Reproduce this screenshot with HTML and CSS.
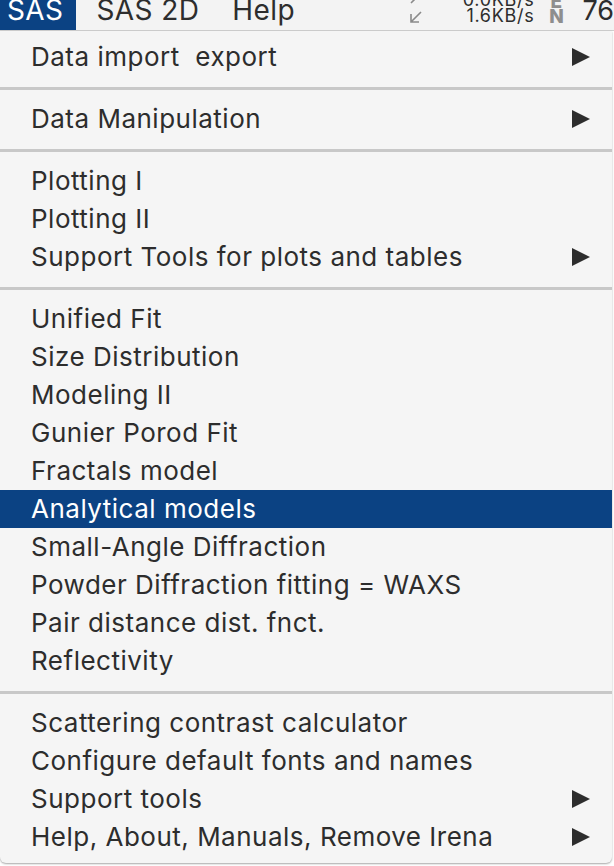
FILE: index.html
```html
<!DOCTYPE html>
<html>
<head>
<meta charset="utf-8">
<link rel="stylesheet" href="styles.css">
</head>
<body>
<div class="menubar">
  <div class="mb-item mb-active">SAS</div>
  <div class="mb-item">SAS 2D</div>
  <div class="mb-item">Help</div>
  <div class="mb-spacer"></div>
  <div class="net-arrows">
    <svg width="16" height="30" viewBox="0 0 16 30">
      <path d="M3 3 L13 -7 M7 -7 H13 V-1" fill="none" stroke="#8a8a8a" stroke-width="1.6"/>
      <path d="M13 12 L3 22 M3 14 V22 H11" fill="none" stroke="#8a8a8a" stroke-width="1.6"/>
    </svg>
  </div>
  <div class="net-rates">
    <span>0.0KB/s</span>
    <span>1.6KB/s</span>
  </div>
  <div class="lang">
    <span class="lang-e">E</span>
    <span class="lang-n">N</span>
  </div>
  <div class="clock">76</div>
</div>
<div class="menu">
  <div class="item"><span>Data import  export</span><i class="arrow"></i></div>
  <div class="sep"></div>
  <div class="item"><span>Data Manipulation</span><i class="arrow"></i></div>
  <div class="sep"></div>
  <div class="item"><span>Plotting I</span></div>
  <div class="item"><span>Plotting II</span></div>
  <div class="item"><span>Support Tools for plots and tables</span><i class="arrow"></i></div>
  <div class="sep"></div>
  <div class="item"><span>Unified Fit</span></div>
  <div class="item"><span>Size Distribution</span></div>
  <div class="item"><span>Modeling II</span></div>
  <div class="item"><span>Gunier Porod Fit</span></div>
  <div class="item"><span>Fractals model</span></div>
  <div class="item selected"><span>Analytical models</span></div>
  <div class="item"><span>Small-Angle Diffraction</span></div>
  <div class="item"><span>Powder Diffraction fitting = WAXS</span></div>
  <div class="item"><span>Pair distance dist. fnct.</span></div>
  <div class="item"><span>Reflectivity</span></div>
  <div class="sep"></div>
  <div class="item"><span>Scattering contrast calculator</span></div>
  <div class="item"><span>Configure default fonts and names</span></div>
  <div class="item"><span>Support tools</span><i class="arrow"></i></div>
  <div class="item"><span>Help, About, Manuals, Remove Irena</span><i class="arrow"></i></div>
</div>
</body>
</html>
```

FILE: styles.css
```css
html, body {
  margin: 0;
  padding: 0;
}
body {
  width: 614px;
  height: 866px;
  overflow: hidden;
  background: #ffffff;
  font-family: Inter, "Liberation Sans", sans-serif;
  color: #2d2d2d;
}
.menubar {
  height: 30px;
  border-bottom: 1px solid #cfcfcf;
  background: #f3f3f3;
  display: flex;
  align-items: flex-start;
  overflow: hidden;
}
.mb-item {
  font-size: 28px;
  letter-spacing: 0.4px;
  line-height: 20px;
  height: 30px;
  padding: 0 33px 0 0;
  color: #2d2d2d;
  white-space: nowrap;
}
.mb-active {
  background: #0b4283;
  color: #ffffff;
  padding: 0 13px 0 7px;
  margin-right: 20px;
}
.mb-spacer {
  flex: 1;
}
.net-arrows {
  width: 16px;
  height: 30px;
  margin-right: 39px;
}
.net-rates {
  display: flex;
  flex-direction: column;
  align-items: flex-end;
  font-size: 18px;
  letter-spacing: 0.7px;
  line-height: 16px;
  margin-top: -8px;
  color: #2d2d2d;
  margin-right: 15px;
  white-space: nowrap;
}
.lang {
  display: flex;
  flex-direction: column;
  align-items: center;
  width: 14px;
  font-weight: 800;
  color: #8e8e8e;
  font-size: 19px;
  line-height: 14px;
  margin-top: -5px;
  margin-right: 19px;
}
.lang-n {
  font-size: 19px;
  line-height: 16px;
}
.clock {
  font-size: 27px;
  line-height: 21px;
  color: #2d2d2d;
  white-space: nowrap;
}
.menu {
  width: 612px;
  background: #f5f5f5;
  padding: 7px 0 7px;
  border-radius: 0 0 6px 6px;
  box-shadow: 0 1px 2px rgba(0,0,0,0.35);
}
.item {
  height: 38px;
  display: flex;
  align-items: center;
  justify-content: space-between;
  padding: 0 22px 0 31px;
  font-size: 26px;
  letter-spacing: 0.5px;
  white-space: pre;
  color: #2d2d2d;
}
.item span {
  padding-bottom: 1px;
}
.item.selected {
  background: #0b4283;
  color: #ffffff;
}
.arrow {
  width: 0;
  height: 0;
  border-left: 18px solid #2d2d2d;
  border-top: 9px solid transparent;
  border-bottom: 9px solid transparent;
}
.sep {
  height: 3px;
  background: #c8c8c8;
  margin: 11px 0 10px;
}
```
